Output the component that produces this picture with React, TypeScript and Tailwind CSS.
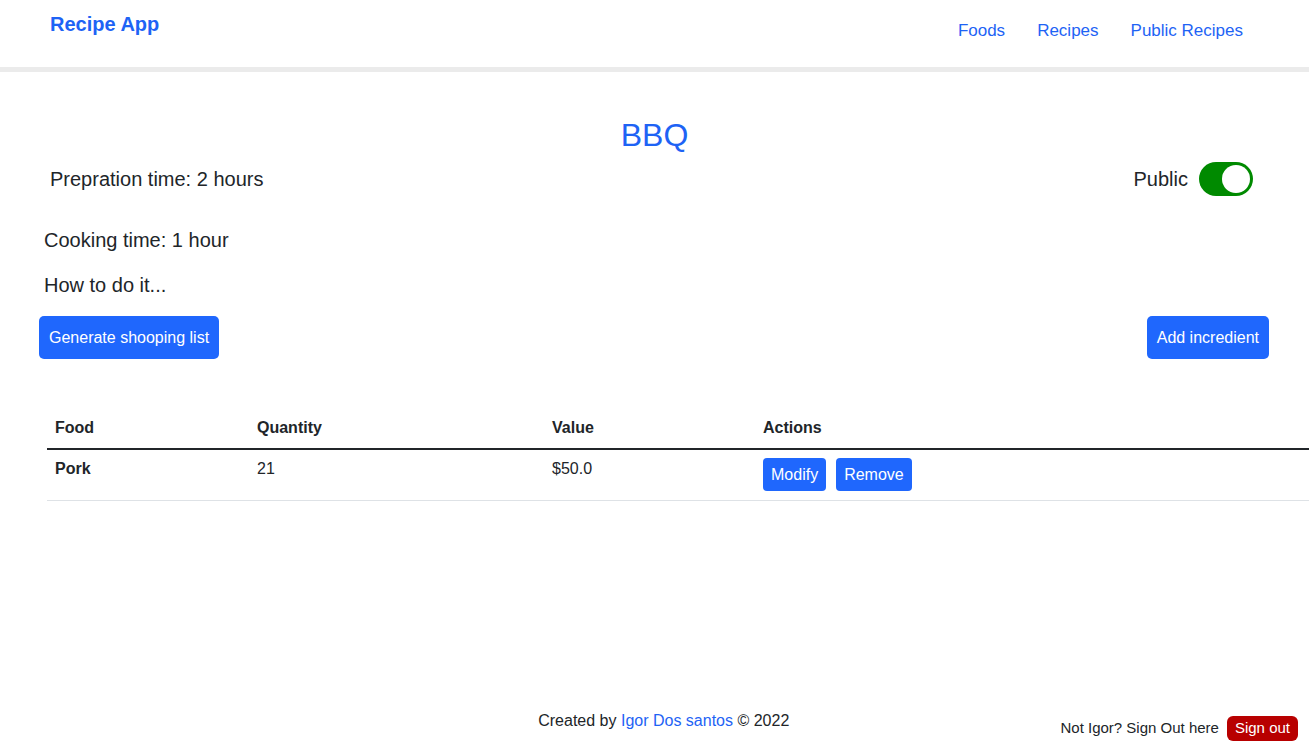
import React from "react"

const blue = "text-[#1e63f5]"

function Toggle() {
  return (
    <span className="flex h-[34px] w-[54px] items-center justify-end rounded-full bg-[#008a00] px-[3px]">
      <span className="h-[28px] w-[28px] rounded-full bg-white" />
    </span>
  )
}

export default function App() {
  return (
    <div className="flex min-h-[745px] flex-col bg-white text-[#212529] [font-family:'Liberation_Sans',Arial,sans-serif]">
      <header className="flex h-[72px] items-start justify-between border-b-[5px] border-[#ebebeb]">
        <a className={`ml-[50px] mt-[9px] text-[20px] font-bold ${blue}`}>Recipe App</a>
        <nav className={`mr-[66px] mt-[18px] flex gap-[32px] text-[17px] ${blue}`}>
          <a>Foods</a>
          <a>Recipes</a>
          <a>Public Recipes</a>
        </nav>
      </header>

      <main className="flex flex-col">
        <h1 className={`mt-[45px] text-center text-[32px] leading-[36px] ${blue}`}>BBQ</h1>
        <div className="mt-[9px] flex items-center justify-between pl-[50px] pr-[56px]">
          <p className="text-[20px]">Prepration time: 2 hours</p>
          <div className="flex items-center gap-[11px]">
            <span className="text-[20px]">Public</span>
            <Toggle />
          </div>
        </div>
        <p className="ml-[44px] mt-[29px] text-[20px]">Cooking time: 1 hour</p>
        <p className="ml-[44px] mt-[15px] text-[20px]">How to do it...</p>

        <div className="mt-[16px] flex justify-between pl-[39px] pr-[40px]">
          <button className="h-[43px] rounded-[5px] bg-[#1f67fd] px-[10px] text-[16px] text-white">
            Generate shooping list
          </button>
          <button className="h-[43px] rounded-[5px] bg-[#1f67fd] px-[10px] text-[16px] text-white">
            Add incredient
          </button>
        </div>

        <table className="ml-[47px] mt-[47px] w-[1262px] border-collapse text-left text-[16px]">
          <thead>
            <tr className="border-b-2 border-[#212529]">
              <th className="w-[202px] px-[8px] pb-[8px] pt-[10px] font-bold">Food</th>
              <th className="w-[295px] px-[8px] pb-[8px] pt-[10px] font-bold">Quantity</th>
              <th className="w-[211px] px-[8px] pb-[8px] pt-[10px] font-bold">Value</th>
              <th className="px-[8px] pb-[8px] pt-[10px] font-bold">Actions</th>
            </tr>
          </thead>
          <tbody>
            <tr className="border-b border-[#dee2e6]">
              <td className="px-[8px] pt-[7px] align-top font-bold">Pork</td>
              <td className="px-[8px] pt-[7px] align-top">21</td>
              <td className="px-[8px] pt-[7px] align-top">$50.0</td>
              <td className="px-[8px] pb-[9px] pt-[8px] align-top">
                <div className="flex gap-[10px]">
                  <button className="h-[33px] rounded-[4px] bg-[#1f67fd] px-[8px] text-[16px] text-white">Modify</button>
                  <button className="h-[33px] rounded-[4px] bg-[#1f67fd] px-[8px] text-[16px] text-white">Remove</button>
                </div>
              </td>
            </tr>
          </tbody>
        </table>
      </main>

      <footer className="mt-auto flex items-end justify-between pb-[4px]">
        <div className="w-[240px]" />
        <p className="mb-[8px] ml-[27px] text-[16px]">
          Created by <a className={blue}>Igor Dos santos</a> © 2022
        </p>
        <div className="mr-[11px] flex items-center gap-[8px]">
          <span className="text-[15px]">Not Igor? Sign Out here</span>
          <button className="h-[25px] rounded-[6px] bg-[#b80000] px-[8px] text-[15px] text-white">Sign out</button>
        </div>
      </footer>
    </div>
  )
}
